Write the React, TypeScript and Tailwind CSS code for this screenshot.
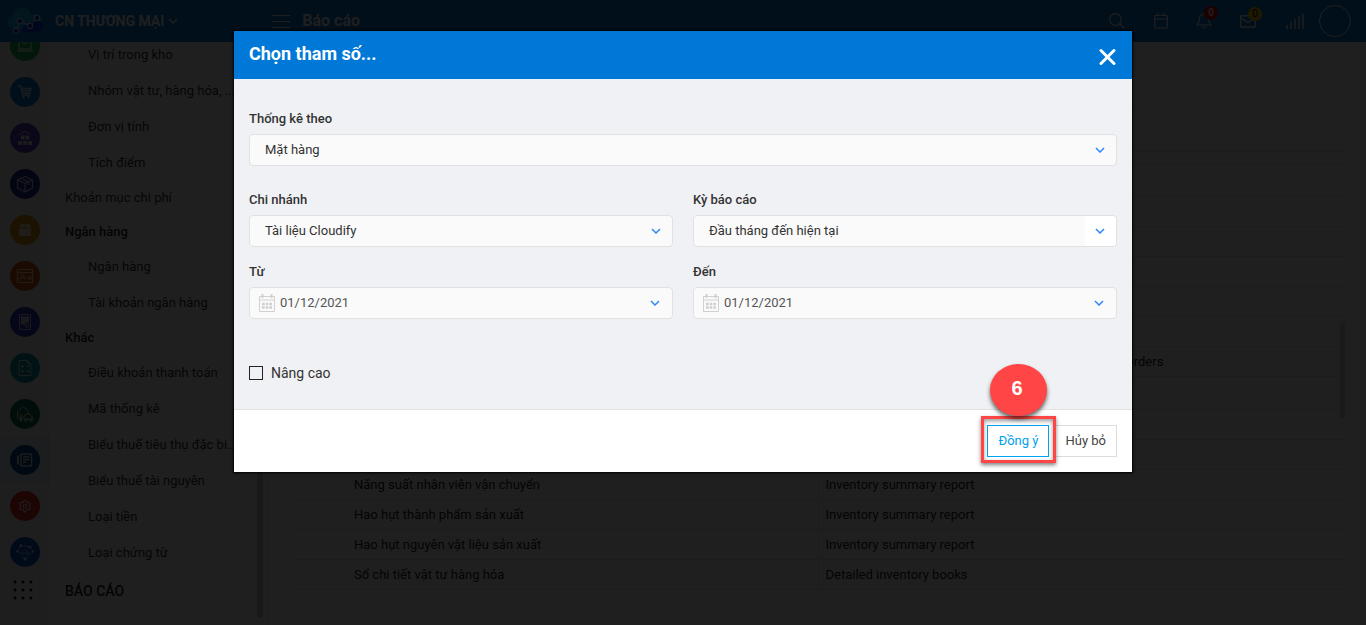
import { useState, type ReactNode } from "react";
import { clsx } from "clsx";
import { Settings } from "lucide-react";

type MenuEntry = { label: string; kind: "sub" | "item" | "group" | "section" };

const menu: MenuEntry[] = [
  { label: "Vị trí trong kho", kind: "sub" },
  { label: "Nhóm vật tư, hàng hóa, ...", kind: "sub" },
  { label: "Đơn vị tính", kind: "sub" },
  { label: "Tích điểm", kind: "sub" },
  { label: "Khoản mục chi phí", kind: "item" },
  { label: "Ngân hàng", kind: "group" },
  { label: "Ngân hàng", kind: "sub" },
  { label: "Tài khoản ngân hàng", kind: "sub" },
  { label: "Khác", kind: "group" },
  { label: "Điều khoản thanh toán", kind: "sub" },
  { label: "Mã thống kê", kind: "sub" },
  { label: "Biểu thuế tiêu thụ đặc bi...", kind: "sub" },
  { label: "Biểu thuế tài nguyên", kind: "sub" },
  { label: "Loại tiền", kind: "sub" },
  { label: "Loại chứng từ", kind: "sub" },
  { label: "BÁO CÁO", kind: "section" },
];

type ReportRow = { name: string; template: string; tall?: boolean };

const reports: ReportRow[] = [
  { name: "", template: "", tall: true },
  { name: "", template: "" },
  { name: "", template: "" },
  { name: "", template: "" },
  { name: "", template: "" },
  { name: "", template: "" },
  { name: "", template: "Detailed summary report on the sales and purchase orders" },
  { name: "", template: "", tall: true },
  { name: "", template: "" },
  { name: "", template: "" },
  { name: "Năng suất nhân viên vận chuyển", template: "Inventory summary report" },
  { name: "Hao hụt thành phẩm sản xuất", template: "Inventory summary report" },
  { name: "Hao hụt nguyên vật liệu sản xuất", template: "Inventory summary report" },
  { name: "Sổ chi tiết vật tư hàng hóa", template: "Detailed inventory books" },
];

function Glyph({ children }: { children: ReactNode }) {
  return (
    <svg
      className="opacity-80"
      width="18"
      height="18"
      viewBox="0 0 18 18"
      fill="none"
      stroke="white"
      strokeWidth="1"
      strokeLinejoin="round"
    >
      {children}
    </svg>
  );
}

const modules = [
  {
    name: "Bán hàng",
    color: "bg-[#12b048]",
    glyph: <path d="M3 3h12v9H3zM1 14h16M6 5l3 2 3-2" strokeWidth="1.5" />,
  },
  {
    name: "Mua hàng",
    color: "bg-[#0a78d0]",
    glyph: (
      <>
        <path d="M2 3h2.5l2.2 9H14M5.5 5.500H15l-1.200 4.500H6.500M6 7.700h8.500" strokeWidth="1.300" />
        <circle cx="7.500" cy="14" r="1.200" fill="white" stroke="none" />
        <circle cx="12.500" cy="14" r="1.200" fill="white" stroke="none" />
      </>
    ),
  },
  {
    name: "Kho",
    color: "bg-[#5a3fc0]",
    glyph: (
      <>
        <path d="M3.500 5.500 9 2l5.500 3.500" />
        <path d="M5 6.500h3.600v4H5zM9.600 6.500h3.600v4H9.600zM2 12h4v4H2zM7 12h4v4H7zM12 12h4v4h-4z" fill="white" stroke="none" />
      </>
    ),
  },
  {
    name: "Sản phẩm",
    color: "bg-[#1c2b9c]",
    glyph: <path d="M9 1.500 16.500 5v8L9 17l-7.500-4V5zM1.500 5 9 8.500 16.500 5M9 8.500V17M5 3.300l7.500 3.700v3" strokeWidth="1.200" />,
  },
  {
    name: "Đóng gói",
    color: "bg-[#d9950a]",
    glyph: <path d="M4.500 3H8.500v3.500H3zM9.500 3h4L15 6.500H9.500zM3 7.500h12V15H3z" fill="white" stroke="none" />,
  },
  {
    name: "Nhân sự",
    color: "bg-[#d8560e]",
    glyph: (
      <>
        <path d="M1.500 2.500h15v13h-15zM1.500 5.500h15M4 12.500c0-3 5-3 5 0M10.500 11H15M13 9l2 2-2 2" strokeWidth="1.200" />
        <circle cx="6.500" cy="8.500" r="1.300" />
      </>
    ),
  },
  {
    name: "Hóa đơn",
    color: "bg-[#2b3bc8]",
    glyph: (
      <>
        <path d="M3.500 1.500h11v15h-11z" />
        <path d="M5 3.500h8v6H9.500v2H5z" fill="white" stroke="none" />
        <circle cx="11" cy="12.500" r="1.700" />
      </>
    ),
  },
  {
    name: "Kế toán",
    color: "bg-[#06949a]",
    glyph: (
      <path d="M3 1.500h8.500L15 5v11.500H3zM11.500 1.500V5H15M5 7.500h3M6.500 6v3M10.500 7.500h3M5.300 11l2.400 2.500M7.700 11l-2.400 2.500M10.500 12.300h3M12 10.800v3" />
    ),
  },
  {
    name: "Tài sản",
    color: "bg-[#04695a]",
    glyph: (
      <>
        <path d="M1.500 14V6.500L7 1.500l5.500 4.500v2.500M8 14v-3l2-2h4l1 2.500 2 .5V14z" />
        <circle cx="10" cy="15" r="1.300" />
        <circle cx="15" cy="15" r="1.300" />
        <path d="M3.500 11h3v5h-3z" fill="white" stroke="none" />
        <circle cx="5" cy="10.500" r="2" fill="#e8a800" stroke="none" />
      </>
    ),
  },
  {
    name: "Báo cáo",
    color: "bg-[#044a8c]",
    active: true,
    glyph: (
      <>
        <path d="M5 3h10.500v12H5zM2 4v10M7 6h6.500M7 8.500h6.500M7 11h3.500" strokeWidth="1.400" />
        <path d="M1 5h2v8H1z" fill="white" stroke="none" />
      </>
    ),
  },
  {
    name: "Thiết lập",
    color: "bg-[#e0281e]",
    glyph: <Settings x="2" y="2" width="14" height="14" color="white" strokeWidth="2" />,
  },
  {
    name: "Kết nối",
    color: "bg-[#0f52cc]",
    glyph: (
      <>
        <path d="M1.500 8 5 2.500 14 4l3 4.500L9 16zM6 10.500h6c1-2-.5-3-1.500-2.500C10 6 7 6 7 8c-1.500 0-2 1.500-1 2.500z" strokeDasharray="2 1" />
        <g fill="white" stroke="none">
          <circle cx="1.500" cy="8.500" r="1.300" />
          <circle cx="5" cy="2.500" r="1.500" />
          <circle cx="14" cy="4" r="1.600" />
          <circle cx="16.800" cy="8.500" r="1.300" />
          <circle cx="9" cy="16" r="1.600" />
        </g>
      </>
    ),
  },
];

function Chevron({ className }: { className?: string }) {
  return (
    <svg className={className} width="10" height="6" viewBox="0 0 10 6" fill="none" stroke="currentColor" strokeWidth="1.500">
      <path d="M1 1l4 4 4-4" />
    </svg>
  );
}

function CalendarGlyph() {
  return (
    <svg width="16" height="18" viewBox="0 0 16 18" fill="none" stroke="#d0d0d0">
      <path d="M.5 2.500h15v15H.5zM.5 6H15.500" />
      <path d="M3.500 0v4M12.500 0v4" strokeWidth="2" />
      <path d="M3 10h2.700M6.700 10h2.600M10.300 10H13M3 13.500h2.700M6.700 13.500h2.600M10.300 13.500H13" strokeWidth="2.600" />
    </svg>
  );
}

function TopBar() {
  return (
    <header className="flex h-[42px] shrink-0 items-center bg-[#0078d7] pr-[15px] pl-[7px] text-white">
      <svg width="36" height="28" viewBox="0 0 36 28">
        <path d="M6 22C-2 20-1 10 5 9 8-1 21-2 24 7c8-1 12 3 11 9-1 5-5 7-9 7z" fill="#14b0f4" />
        <path d="M16 25c-2-6 5-9 9-10 4-3 12-1 11 4-1 5-5 6-9 6z" fill="#0038f0" />
        <path d="M9 24l4-10 10 5 7-8" fill="none" stroke="white" />
        <g fill="#0038c0" stroke="white">
          <circle cx="9" cy="24" r="2.800" />
          <circle cx="13" cy="14" r="2.800" />
          <circle cx="23" cy="19" r="2.800" />
          <circle cx="30" cy="11" r="2.800" />
        </g>
      </svg>
      <button type="button" className="ml-3 flex items-center gap-1 text-sm font-bold">
        CN THƯƠNG MẠI
        <Chevron />
      </button>
      <button type="button" aria-label="Menu" className="ml-[94px] flex w-[18px] flex-col gap-[5px]">
        <span className="h-px bg-white" />
        <span className="h-px bg-white" />
        <span className="h-px bg-white" />
      </button>
      <h1 className="ml-3 text-base font-bold">Báo cáo</h1>

      <nav className="ml-auto flex items-center" aria-label="Công cụ">
        <button type="button" aria-label="Tìm kiếm" className="mr-[29px]">
          <svg width="16" height="16" viewBox="0 0 16 16" fill="none" stroke="currentColor" strokeWidth="1.200">
            <circle cx="6.500" cy="6.500" r="5.800" />
            <path d="M10.800 10.800l4.700 4.700" />
          </svg>
        </button>
        <button type="button" aria-label="Lịch" className="mr-[28px]">
          <svg width="14" height="16" viewBox="0 0 14 16" fill="none" stroke="currentColor" strokeWidth="1.200">
            <rect x=".7" y="2.500" width="12.600" height="12.500" rx="1" />
            <path d="M.7 6h12.600M4 0v2.500M10 0v2.500" />
          </svg>
        </button>
        <button type="button" aria-label="Thông báo" className="relative mr-[28px]">
          <svg width="16" height="16" viewBox="0 0 16 16" fill="none" stroke="currentColor" strokeWidth="1.200">
            <path d="M8 1C4.500 1 3.500 3.500 3.500 6c0 3-1 4-2.500 6h14c-1.500-2-2.500-3-2.500-6 0-2.500-1-5-4.500-5zM6.500 14c.5 1 2.500 1 3 0" />
          </svg>
          <span className="absolute -top-[7px] left-2 size-[14px] rounded-full bg-[#e60000] text-[10px] leading-[14px] font-bold">0</span>
        </button>
        <button type="button" aria-label="Tin nhắn" className="relative mr-[30px]">
          <svg width="16" height="14" viewBox="0 0 16 14" fill="none" stroke="currentColor" strokeWidth="1.400">
            <rect x=".7" y="1.700" width="14.600" height="11.300" rx="1" />
            <path d="M1 4l7 4.500L15 4" />
          </svg>
          <span className="absolute -top-[7px] left-2 size-[14px] rounded-full bg-[#ffc400] text-[10px] leading-[14px] text-black">0</span>
        </button>
        <svg className="mr-[15px]" width="18" height="16" viewBox="0 0 18 16" stroke="currentColor" strokeWidth="1.500">
          <path d="M1 16v-4M5 16V9M9 16V6M13 16V3.500M17 16V1" />
        </svg>
        <button type="button" aria-label="Tài khoản" className="size-8 rounded-full border border-white" />
      </nav>
    </header>
  );
}

function ModuleRail() {
  return (
    <nav className="flex w-[50px] shrink-0 flex-col items-center justify-end overflow-hidden bg-[#f4f4f4] pb-[25px]">
      {modules.map((m) => (
        <a
          key={m.name}
          href="#"
          aria-label={m.name}
          className={clsx("flex h-[46px] w-full shrink-0 items-center justify-center", m.active && "bg-[#deebf7]")}
        >
          <span className={clsx("flex size-[30px] items-center justify-center rounded-full", m.color)}>
            <Glyph>{m.glyph}</Glyph>
          </span>
        </a>
      ))}
      <button type="button" aria-label="Tất cả" className="mt-[5px] mr-1 shrink-0">
        <svg width="20" height="20" viewBox="0 0 20 20" fill="black">
          {[2, 10, 18].map((y) => [2, 10, 18].map((x) => <circle key={`${x}-${y}`} cx={x} cy={y} r="1.400" />))}
        </svg>
      </button>
    </nav>
  );
}

function SideMenu() {
  return (
    <aside className="flex w-[219px] shrink-0 border-r border-[#e8e8e8] bg-white pr-[5px] pb-[7px]">
      <ul className="flex min-w-0 flex-1 flex-col justify-end overflow-hidden pb-2 text-[13px] text-[#333]">
        {menu.map((entry, i) => (
          <li
            key={i}
            className={clsx(
              "flex shrink-0 items-center whitespace-nowrap",
              entry.kind === "sub" && "h-9 pl-[38px]",
              entry.kind === "item" && "h-[34px] pl-[15px]",
              entry.kind === "group" && "h-[34px] pl-[15px] font-medium text-[#222]",
              entry.kind === "section" && "h-[39px] pl-[15px] text-sm font-medium text-[#222]",
            )}
          >
            <a href="#">{entry.label}</a>
          </li>
        ))}
      </ul>
      <div className="w-[6px] shrink-0 rounded-full bg-[#c8c8c8]" />
    </aside>
  );
}

function ReportTable() {
  return (
    <main className="min-w-0 flex-1 bg-[#f8f8f8] pt-[67px] pr-5 pl-[21px]">
      <div className="flex border border-[#f0f0f0] bg-white pb-[14px]">
        <table className="w-full table-fixed border-collapse text-[13px] text-[#222]">
          <colgroup>
            <col className="w-1/2" />
            <col />
          </colgroup>
          <thead>
            <tr className="h-[41px] border-b-2 border-[#e0e0e0]">
              <th aria-label="Tên báo cáo" />
              <th aria-label="Mẫu báo cáo" />
            </tr>
            <tr className="h-[12px] border-b border-[#e0e0e0]">
              <td colSpan={2} />
            </tr>
          </thead>
          <tbody>
            {reports.map((row, i) => (
              <tr key={i} className={clsx("border-b border-[#e0e0e0]", row.tall ? "h-[33px]" : "h-[30px]")}>
                <td className="border-r border-[#e0e0e0] pt-px pl-[63px]">{row.name}</td>
                <td className="pt-px pl-[7px]">{row.template}</td>
              </tr>
            ))}
          </tbody>
        </table>
        <div className="mt-[213px] -ml-[5px] h-[95px] w-[5px] shrink-0 bg-[#d0d0d0]" />
      </div>
    </main>
  );
}

type SelectFieldProps = { id: string; label: string; options: string[]; plainButton?: boolean };

function SelectField({ id, label, options, plainButton }: SelectFieldProps) {
  return (
    <div className="flex flex-col gap-[5px]">
      <label htmlFor={id} className="text-[13px] leading-5 font-medium">
        {label}
      </label>
      <div className="relative">
        <select
          id={id}
          className="h-8 w-full appearance-none rounded border border-[#dfe1e3] bg-[#fafafa] px-[15px] text-[13px] text-[#333]"
        >
          {options.map((o) => (
            <option key={o}>{o}</option>
          ))}
        </select>
        <span
          className={clsx(
            "pointer-events-none absolute inset-y-px right-px flex w-[31px] items-center justify-center rounded-r pr-px text-[#2f86f6]",
            plainButton && "bg-white",
          )}
        >
          <Chevron />
        </span>
      </div>
    </div>
  );
}

function DateField({ id, label }: { id: string; label: string }) {
  const [value, setValue] = useState("01/12/2021");
  return (
    <div className="flex flex-col gap-[5px]">
      <label htmlFor={id} className="text-[13px] leading-5 font-medium">
        {label}
      </label>
      <div className="flex h-8 items-center gap-[5px] rounded border border-[#dfe1e3] bg-[#fafafa] pr-[12px] pl-[9px]">
        <CalendarGlyph />
        <input
          id={id}
          value={value}
          onChange={(e) => setValue(e.target.value)}
          className="min-w-0 flex-1 bg-transparent text-[13px] text-[#555] outline-none"
        />
        <Chevron className="text-[#2f86f6]" />
      </div>
    </div>
  );
}

function ParameterDialog() {
  return (
    <div
      role="dialog"
      aria-labelledby="dialog-title"
      className="w-full max-w-[898px] bg-white text-[#333] shadow-[0_0_2px_1px_#000]"
    >
      <div className="flex h-12 items-center justify-between bg-[#0078d7] px-[15px] pb-[2px] text-white">
        <h2 id="dialog-title" className="text-lg leading-6 font-bold">
          Chọn tham số...
        </h2>
        <button type="button" aria-label="Đóng" className="pt-[6px]">
          <svg width="20" height="20" viewBox="0 0 20 20" stroke="currentColor" strokeWidth="3" strokeLinecap="round">
            <path d="M4 3.500l13 13M17 3.500l-13 13" />
          </svg>
        </button>
      </div>

      <div className="flex flex-col bg-[#f0f1f4] px-[15px] pt-[30px] pb-[26px]">
        <SelectField id="group-by" label="Thống kê theo" options={["Mặt hàng", "Khách hàng", "Nhân viên"]} />
        <div className="mt-6 grid grid-cols-2 gap-x-5 gap-y-[15px]">
          <SelectField id="branch" label="Chi nhánh" options={["Tài liệu Cloudify"]} />
          <SelectField
            id="period"
            label="Kỳ báo cáo"
            options={["Đầu tháng đến hiện tại", "Tháng này", "Quý này", "Năm nay"]}
            plainButton
          />
          <DateField id="from" label="Từ" />
          <DateField id="to" label="Đến" />
        </div>
        <label className="mt-11 flex items-center gap-2 self-start text-sm leading-5">
          <input type="checkbox" className="size-[14px] appearance-none border border-[#222] checked:bg-[#0078d7]" />
          Nâng cao
        </label>
      </div>

      <div className="flex justify-end gap-[5px] border-t border-[#e0e2e4] p-[15px] text-[13px]">
        <div className="relative">
          <button type="button" className="h-8 border border-[#00a1ee] bg-white px-[10px] text-[#00a1ee]">
            Đồng ý
          </button>
          {/* step marker */}
          <div className="pointer-events-none absolute -top-[9px] -right-[7px] -bottom-[6px] -left-[6px] border-3 border-[#ff4545] shadow-[0_2px_4px_rgba(0,0,0,0.5),inset_0_2px_4px_rgba(0,0,0,0.4)]">
            <span className="absolute bottom-full left-[6px] mb-[3px] flex h-[52px] w-[57px] items-center justify-center rounded-[50%] bg-[#ff4545] pr-1 pb-1 font-['Liberation_Sans',sans-serif] text-xl font-bold text-white shadow-[0_3px_4px_rgba(0,0,0,0.6)]">
              6
            </span>
          </div>
        </div>
        <button type="button" className="h-8 border border-[#dcdcdc] bg-white px-[10px] text-[#444]">
          Hủy bỏ
        </button>
      </div>
    </div>
  );
}

export default function App() {
  return (
    <div className="relative flex h-screen flex-col overflow-hidden font-['Roboto',sans-serif]">
      <TopBar />
      <div className="flex min-h-0 flex-1">
        <ModuleRail />
        <SideMenu />
        <ReportTable />
      </div>
      <div className="absolute inset-0 flex items-start justify-center bg-black/88 pt-[31px]">
        <ParameterDialog />
      </div>
    </div>
  );
}
